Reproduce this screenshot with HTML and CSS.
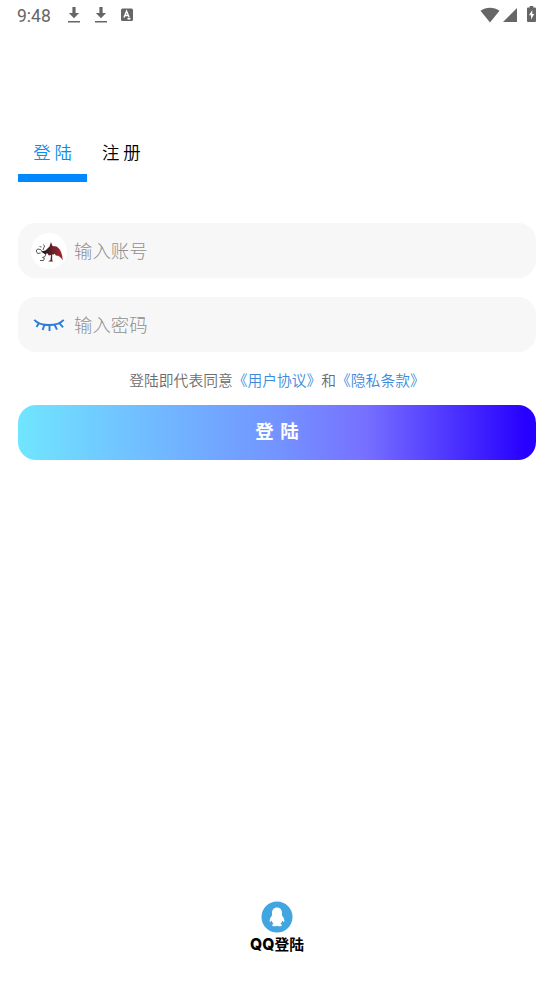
FILE: index.html
```html
<!DOCTYPE html>
<html lang="zh-CN">
<head>
<meta charset="utf-8">
<title>登陆</title>
<link rel="stylesheet" href="styles.css">
</head>
<body>
<header class="status">
  <span class="time">9:48</span>
  <svg class="download" width="14" height="18" viewBox="0 0 14 18"><path d="M5.400 1h3.200v6h3.500L7 12.300 1.900 7h3.500zM1 15h12v1.600H1z"/></svg>
  <svg class="download" width="14" height="18" viewBox="0 0 14 18"><path d="M5.400 1h3.200v6h3.500L7 12.300 1.900 7h3.500zM1 15h12v1.600H1z"/></svg>
  <svg class="keyboard" width="12" height="14" viewBox="0 0 12 14"><rect y=".5" width="12" height="12.500" rx="1.500"/><path d="M3 9.500 5.600 3.200 8.200 9.500M4 7.500h3.300M6.500 10.800h3" fill="none" stroke="#fff" stroke-width="1.400"/></svg>
  <span class="spacer"></span>
  <svg width="20" height="16" viewBox="0 0 20 16"><path d="M.5 3.700C6-.4 14-.4 19.500 3.700L10 15.500z"/></svg>
  <svg class="signal" width="14" height="14" viewBox="0 0 14 14"><path d="M14 0v14H0z"/></svg>
  <svg class="battery" width="9" height="16" viewBox="0 0 9 16"><path d="M2.700 0h3.600v1.500H8q1 0 1 1V15q0 1-1 1H1q-1 0-1-1V2.500q0-1 1-1h1.700z"/><path d="M5.300 4 2 9.300h2.100V13.500L7.200 8H5.300z" fill="#fff"/></svg>
</header>
<main>
  <nav class="tabs">
    <a class="tab active">登 陆</a>
    <a class="tab">注 册</a>
  </nav>
  <div class="field">
    <span class="avatar">
      <svg width="36" height="36" viewBox="0 0 36 36">
        <defs><linearGradient id="wing"><stop offset="0" stop-color="#180d10"/><stop offset=".5" stop-color="#64222a"/><stop offset="1" stop-color="#ad232c"/></linearGradient></defs>
        <path d="M10 18.500 14.500 17.500 18.500 13.500 20 9l1.500 4 4 .5c3.500 2 6 6.500 6.200 14-1.500-3-3.500-5-7-5l-.8-1.800-1.700 1-1-.5v6l1 1.300h-5l2.300-1.500.5-5-2 .5-2-2.500-1.500 1.500z" fill="url(#wing)"/>
        <path d="M11 18.500 9.500 16.500l-3-.5-1.300 2 1.500 2.500 3-.5M8.500 13.500l2 .5M12.500 11.500l1 1.500-1.500 4M15 20.500l-1 3-2.500 1 2 1-1 2H9" fill="none" stroke="#382c30" stroke-width=".8"/>
      </svg>
    </span>
    <span class="placeholder">输入账号</span>
  </div>
  <div class="field">
    <svg class="eye" width="36" height="36" viewBox="0 0 36 36"><path d="M3.300 12.800C9.500 19.700 26.500 19.700 32.700 12.800M8 16 5.500 20M13.300 18l-1.600 5M18.500 18.500v5.500M23.700 18l2.300 4.700M28 15.700l4 4.600" fill="none" stroke="#2b7bd9" stroke-width="1.900"/></svg>
    <span class="placeholder">输入密码</span>
  </div>
  <p class="terms">登陆即代表同意<a>《用户协议》</a>和<a>《隐私条款》</a></p>
  <div class="submit">登 陆</div>
</main>
<footer class="qq">
  <svg width="32" height="32" viewBox="0 0 32 32"><circle cx="16" cy="16" r="15.500" fill="#41a5df"/><path d="M16 6.500c-3.300 0-5 2.400-5 5.500v2.500c-1.600 2-2.700 4.300-2.300 6 .2.800 1.300.3 2.100-1 .2 1.400.8 2.500 1.800 3.400-1.300.4-1.800 1-1.500 1.700.4 1 3.800.8 4.900.1 1.100.7 4.500.9 4.900-.1.300-.7-.2-1.300-1.500-1.700 1-.9 1.600-2 1.800-3.400.8 1.300 1.900 1.800 2.100 1 .4-1.700-.7-4-2.300-6V12c0-3.100-1.700-5.500-5-5.500z" fill="#fff"/></svg>
  <div class="qq-label"><span class="latin">QQ</span>登陆</div>
</footer>
</body>
</html>
```
FILE: styles.css
```css
* { box-sizing: border-box; }
body {
  margin: 0;
  height: 984px;
  display: flex;
  flex-direction: column;
  background: #fff;
  color: #000;
  font-family: "Noto Sans CJK SC", sans-serif;
  overflow: hidden;
}
svg { display: block; flex: none; }
.status {
  height: 30px;
  padding: 0 18px 0 17px;
  display: flex;
  align-items: center;
  fill: #666;
  color: #666;
}
.time { width: 50px; font: 400 17.5px/30px Roboto, sans-serif; padding-top: 1px; }
.download { margin-right: 13px; }
.keyboard { margin-left: 0; }
.spacer { flex: 1; }
.signal { margin: 0 10px 0 3px; }
.battery { margin-top: -2px; }
main { padding: 0 18.4px; flex: 1; }
.tabs { display: flex; margin-top: 92px; height: 60px; }
.tab {
  width: 68.6px;
  height: 60px;
  border-bottom: 8px solid transparent;
  text-align: center;
  font-size: 17.4px;
  font-weight: 350;
  line-height: 59px;
}
.active { color: #0a8cf0; border-bottom-color: #0089ff; }
.field {
  height: 55px;
  margin: 41px 0 0;
  padding: 0 12.6px;
  border-radius: 18px;
  background: #f7f7f7;
  display: flex;
  align-items: center;
}
.field + .field { margin-top: 19px; }
.avatar { width: 36px; height: 36px; border-radius: 50%; background: #fff; }
.placeholder { margin: -2px 0 0 7px; font-size: 18.4px; line-height: 52px; color: #8f8f8f; font-weight: 300; }
.terms { margin: 17px 0 0; text-align: center; font-size: 14.77px; font-weight: 350; line-height: 22px; color: #6c6c6c; white-space: nowrap; }
.terms a { color: #3c8adb; }
.submit {
  margin-top: 14px;
  height: 55px;
  border-radius: 18px;
  background: linear-gradient(90deg, #70e6ff 0%, #70c4ff 20%, #7394ff 50%, #7770ff 67%, #2800ff 98%);
  color: #fff;
  text-align: center;
  font-size: 18.4px;
  font-weight: 700;
  line-height: 50px;
  word-spacing: 2.5px;
}
.qq { height: 83px; display: flex; flex-direction: column; align-items: center; }
.qq-label { font-size: 14.7px; line-height: 22px; font-weight: 700; white-space: nowrap; }
.latin { font-family: Inter, sans-serif; font-size: 15.6px; font-weight: 800; line-height: 1; }
```
